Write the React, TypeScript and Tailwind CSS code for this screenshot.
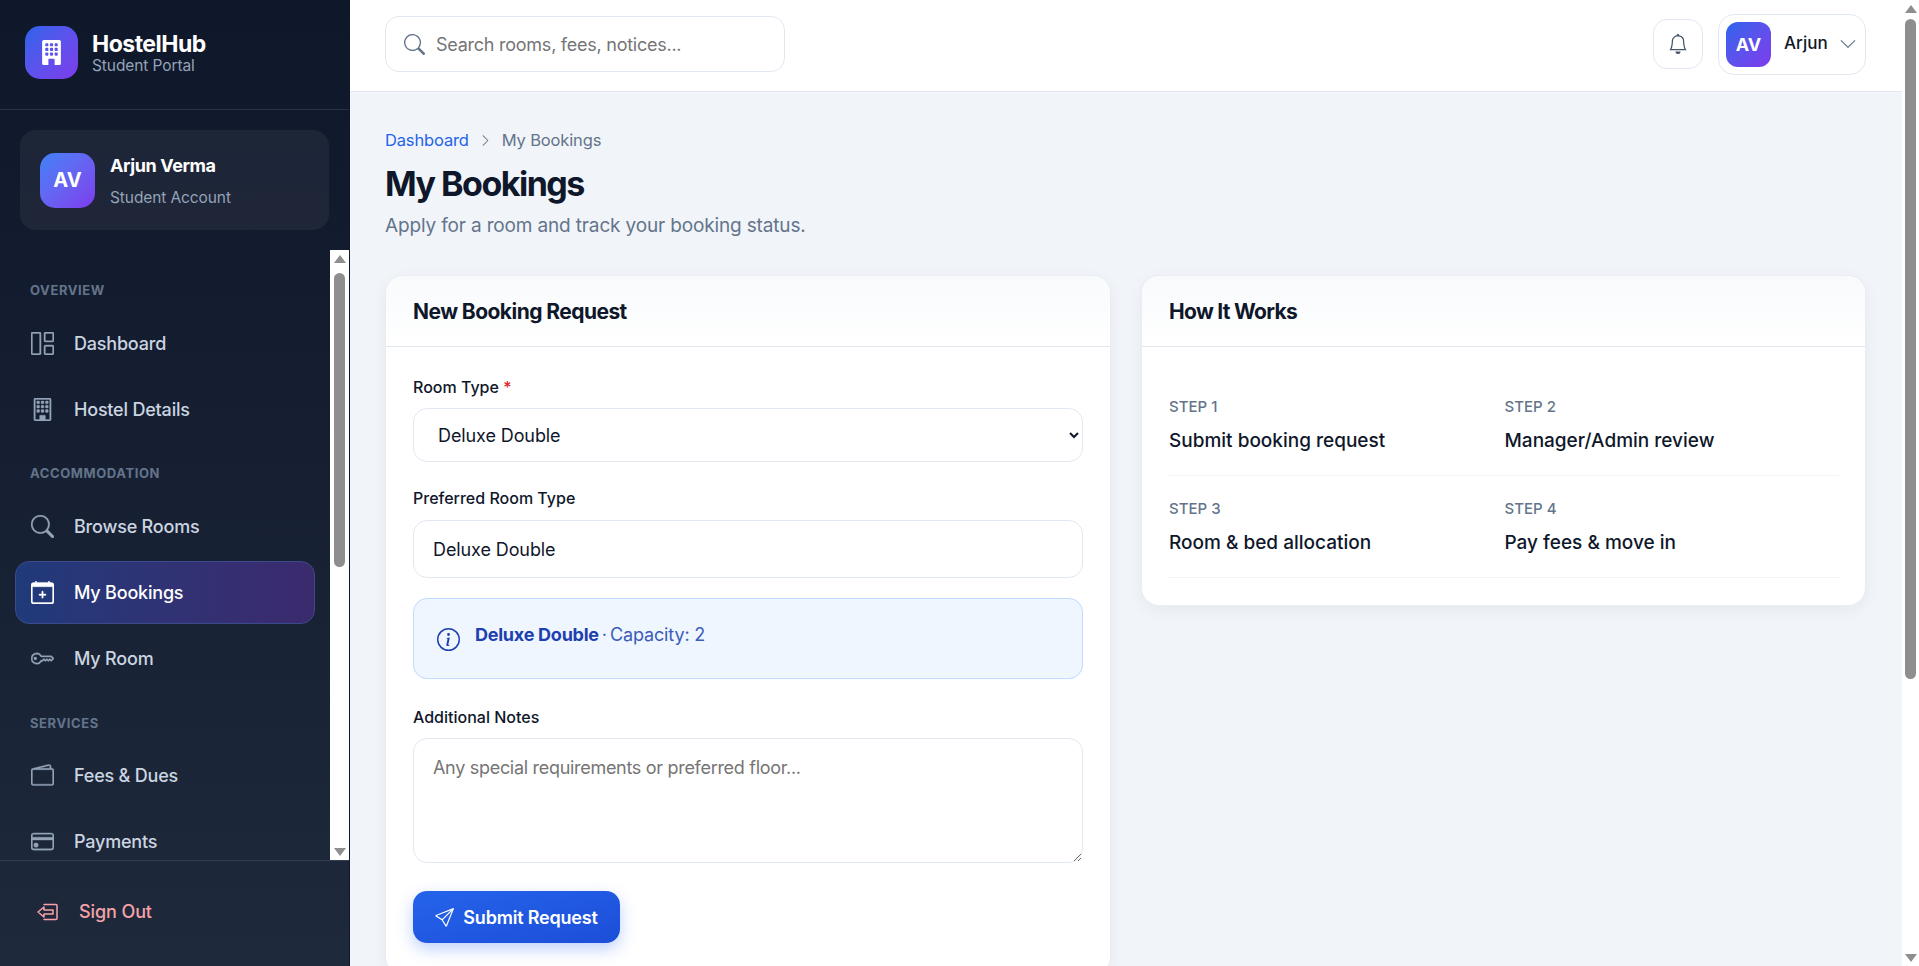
import React from "react";
import {
  BsBuildingFill, BsBuilding, BsGrid1X2, BsSearch, BsCalendarPlus, BsKey, BsWallet2, BsCreditCard,
  BsBell, BsChevronDown, BsChevronRight, BsInfoCircle, BsSend,
} from "react-icons/bs";

const font = "font-['Inter','Liberation_Sans',sans-serif]";

function NavItem({ icon: Icon, label, active }: { icon: React.ComponentType<{ className?: string }>; label: string; active?: boolean }) {
  return (
    <div
      className={
        "mb-[3px] flex h-[63px] items-center gap-[20px] rounded-[14px] border pl-[15px] text-[18px] font-medium tracking-[-0.2px] " +
        (active
          ? "border-[#3a4a8c] bg-gradient-to-r from-[#1f3a7a] to-[#3b2a6e] text-white"
          : "border-transparent text-[#cbd5e1]")
      }
    >
      <Icon className={"size-[23px] shrink-0 stroke-[0.25] " + (active ? "text-white" : "text-[#94a3b8]")} />
      {label}
    </div>
  );
}

function Section({ label }: { label: string }) {
  return <div className="pl-[30px] text-[13px] font-bold tracking-[0.6px] text-[#64748b]">{label}</div>;
}

function ScrollBtn({ up }: { up?: boolean }) {
  return (
    <div className="flex h-[17px] shrink-0 items-center justify-center">
      <div className={"size-0 border-x-[6px] border-x-transparent border-[#8e8e8e]" + (up ? " border-b-[8px]" : " border-t-[8px]")} />
    </div>
  );
}

export default function App() {
  return (
    <div className={"flex h-[966px] w-[1919px] overflow-hidden bg-[#f1f5f9] text-[#0f172a] " + font}>
      <aside className="flex w-[350px] shrink-0 flex-col bg-gradient-to-b from-[#0f172a] to-[#1e293b] border-r border-r-[#111827]">
        <div className="flex h-[110px] shrink-0 items-center gap-[14px] border-b border-white/10 pb-[4px] pl-[25px]">
          <div className="flex size-[53px] items-center justify-center rounded-[15px] bg-gradient-to-br from-[#2563eb] to-[#7c3aed]">
            <BsBuildingFill className="size-[25px] text-white" />
          </div>
          <div>
            <div className="text-[23px] leading-[27px] font-bold tracking-[-0.5px] text-white">HostelHub</div>
            <div className="text-[15.5px] leading-[16px] tracking-[-0.1px] text-[#94a3b8]">Student Portal</div>
          </div>
        </div>
        <div className="px-[20px] pt-[20px] pb-[20px]">
          <div className="flex h-[100px] w-[309px] items-center gap-[15px] rounded-[16px] bg-white/5 pl-[20px]">
            <div className="flex size-[55px] items-center justify-center rounded-[15px] bg-gradient-to-br from-[#3b82f6] to-[#7c3aed] text-[20px] font-bold text-white">
              AV
            </div>
            <div>
              <div className="text-[18px] leading-[26px] font-bold tracking-[-0.4px] text-white">Arjun Verma</div>
              <div className="mt-[9px] text-[15.5px] leading-[20px] tracking-[-0.1px] text-[#94a3b8]">Student Account</div>
            </div>
          </div>
        </div>
        <div className="flex min-h-0 flex-1">
          <nav className="min-w-0 flex-1 overflow-hidden pt-[31px]">
            <div className="flex h-full flex-col">
              <Section label="OVERVIEW" />
              <div className="mt-[11px] px-[15px]">
                <NavItem icon={BsGrid1X2} label="Dashboard" />
                <NavItem icon={BsBuilding} label="Hostel Details" />
              </div>
              <div className="mt-[20px]"><Section label="ACCOMMODATION" /></div>
              <div className="mt-[12px] px-[15px]">
                <NavItem icon={BsSearch} label="Browse Rooms" />
                <NavItem icon={BsCalendarPlus} label="My Bookings" active />
                <NavItem icon={BsKey} label="My Room" />
              </div>
              <div className="mt-[21px]"><Section label="SERVICES" /></div>
              <div className="mt-[10px] px-[15px]">
                <NavItem icon={BsWallet2} label="Fees & Dues" />
                <NavItem icon={BsCreditCard} label="Payments" />
              </div>
            </div>
          </nav>
          <div className="flex w-[19px] shrink-0 flex-col bg-white px-[4px]">
            <ScrollBtn up />
            <div className="mt-[6px] h-[294px] rounded-full bg-[#8e8e8e]" />
            <div className="flex-1" />
            <ScrollBtn />
          </div>
        </div>
        <div className="flex h-[106px] shrink-0 items-center gap-[19px] border-t border-white/10 pb-[4px] pl-[36px] text-[18px] font-medium tracking-[-0.1px] text-[#f5a3a8]">
          <svg viewBox="0 0 24 24" className="size-[24px]" fill="none" stroke="currentColor" strokeWidth="1.5" strokeLinejoin="round" strokeLinecap="round">
            <path d="M8 4.5h12a1 1 0 0 1 1 1v13a1 1 0 0 1-1 1H8" />
            <path d="M2 12l6-5v3h9v4H8v3z" />
          </svg>
          Sign Out
        </div>
      </aside>

      <div className="flex min-w-0 flex-1 flex-col">
        <header className="flex h-[92px] shrink-0 items-center justify-between border-b border-[#e2e8f0] bg-white pr-[36px] pb-[3px] pl-[35px]">
          <div className="flex h-[56px] w-[400px] items-center gap-[11px] rounded-[14px] border border-[#e2e8f0] pl-[18px]">
            <BsSearch className="size-[21px] text-[#64748b]" />
            <span className="text-[18px] tracking-[-0.25px] text-[#757575]">Search rooms, fees, notices...</span>
          </div>
          <div className="flex items-center gap-[15px]">
            <div className="flex size-[50px] items-center justify-center rounded-[14px] border border-[#e2e8f0]">
              <BsBell className="size-[20px] text-[#475569]" />
            </div>
            <div className="flex h-[61px] w-[148px] items-center rounded-[16px] border border-[#e2e8f0] pl-[7px]">
              <div className="flex size-[45px] items-center justify-center rounded-[12px] bg-gradient-to-br from-[#2563eb] to-[#7c3aed] text-[18px] font-bold text-white">
                AV
              </div>
              <span className="ml-[13px] text-[17px] font-medium">Arjun</span>
              <BsChevronDown className="ml-[11px] size-[18px] text-[#64748b]" />
            </div>
          </div>
        </header>
        <main className="min-h-0 flex-1 overflow-hidden pr-[36px] pl-[35px]">
          <div className="flex items-center pt-[38px] text-[16.5px] leading-[20px] tracking-[-0.15px]">
            <span className="text-[#2563eb]">Dashboard</span>
            <BsChevronRight className="mx-[10px] size-[13px] text-[#64748b]" />
            <span className="text-[#64748b]">My Bookings</span>
          </div>
          <h1 className="mt-[10px] text-[34px] leading-[48px] font-bold tracking-[-1.5px] text-[#0f172a]">My Bookings</h1>
          <p className="mt-[5px] text-[19px] leading-[26px] tracking-[-0.15px] text-[#64748b]">Apply for a room and track your booking status.</p>
          <div className="mt-[36px] grid grid-cols-[726px_725px] gap-[30px]">
            <section className="h-[700px] overflow-hidden rounded-[18px] border border-[#e8edf3] bg-white shadow-[0_4px_16px_rgba(15,23,42,0.05)]">
              <div className="flex h-[71px] items-center border-b border-[#e2e8f0] bg-gradient-to-b from-[#f8fafc] to-white pt-[2px] pl-[27px]">
                <h2 className="text-[21px] font-bold tracking-[-0.55px]">New Booking Request</h2>
              </div>
              <div className="px-[27px] pt-[30px]">
                <label className="block text-[16px] leading-[20px] font-medium">
                  Room Type <span className="text-[#dc2626]">*</span>
                </label>
                <select defaultValue="Deluxe Double" className="mt-[11px] block h-[54px] w-full rounded-[14px] border border-[#e2e8f0] bg-white pr-[8px] pl-[20px] text-[18px] tracking-[-0.1px]">
                  <option>Deluxe Double</option>
                </select>
                <label className="mt-[26px] block text-[16px] leading-[20px] font-medium">Preferred Room Type</label>
                <div className="mt-[12px] flex h-[58px] items-center rounded-[14px] border border-[#e2e8f0] pl-[19px] text-[18px] tracking-[-0.1px]">Deluxe Double</div>
                <div className="mt-[20px] flex h-[81px] items-start gap-[15px] rounded-[14px] border border-[#bfdbfe] bg-[#eff6ff] pt-[24px] pl-[23px] text-[18px] leading-[24px]">
                  <BsInfoCircle className="mt-[5px] size-[23px] text-[#1e40af]" />
                  <div>
                    <span className="font-bold tracking-[-0.25px] text-[#1e40af]">Deluxe Double</span>
                    <span className="ml-[3px] text-[#3b5cb8]">·</span>
                    <span className="ml-[3px] tracking-[-0.15px] text-[#3b5cb8]">Capacity: 2</span>
                  </div>
                </div>
                <label className="mt-[28px] block text-[16px] leading-[20px] font-medium">Additional Notes</label>
                <textarea
                  readOnly
                  placeholder="Any special requirements or preferred floor..."
                  className="mt-[11px] block h-[125px] w-full rounded-[14px] border border-[#e2e8f0] px-[19px] py-[15px] text-[18px] tracking-[-0.3px] placeholder:text-[#757575]"
                />
                <button className="mt-[28px] flex h-[52px] w-[207px] items-center justify-center gap-[9px] rounded-[14px] bg-gradient-to-br from-[#2563eb] to-[#1d4ed8] text-[18px] font-semibold tracking-[-0.2px] text-white shadow-[0_6px_16px_rgba(37,99,235,0.3)]">
                  <BsSend className="size-[19px]" />
                  Submit Request
                </button>
              </div>
            </section>
            <section className="h-[331px] overflow-hidden rounded-[18px] border border-[#e8edf3] bg-white shadow-[0_4px_16px_rgba(15,23,42,0.05)]">
              <div className="flex h-[71px] items-center border-b border-[#e2e8f0] bg-gradient-to-b from-[#f8fafc] to-white pt-[2px] pl-[27px]">
                <h2 className="text-[21px] font-bold tracking-[-0.7px]">How It Works</h2>
              </div>
              <div className="grid grid-cols-2 px-[26px] pt-[34px]">
                {[
                  ["STEP 1", "Submit booking request"],
                  ["STEP 2", "Manager/Admin review"],
                  ["STEP 3", "Room & bed allocation"],
                  ["STEP 4", "Pay fees & move in"],
                ].map(([s, t], i) => (
                  <div key={s} className={"border-b border-[#f1f5f9] pl-[1px] " + (i > 1 ? "h-[102px] pt-[23px]" : "h-[95px] pt-[16px]")}>
                    <div className="text-[15px] leading-[20px] font-medium text-[#64748b]">{s}</div>
                    <div className="mt-[11px] text-[19px] leading-[26px] font-medium">{t}</div>
                  </div>
                ))}
              </div>
            </section>
          </div>
        </main>
      </div>

      <div className="flex w-[17px] shrink-0 flex-col bg-white px-[3px]">
        <ScrollBtn up />
        <div className="mt-[2px] h-[660px] rounded-full bg-[#8e8e8e]" />
        <div className="flex-1" />
        <ScrollBtn />
      </div>
    </div>
  );
}
